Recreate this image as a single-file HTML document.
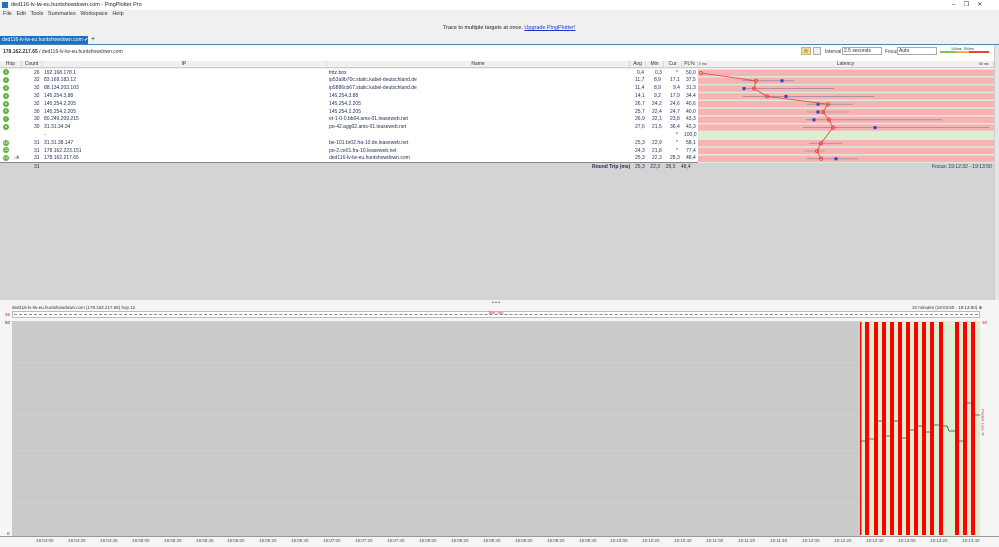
<!DOCTYPE html>
<html><head><meta charset="utf-8"><style>
*{margin:0;padding:0;box-sizing:border-box}
body{width:999px;height:547px;overflow:hidden;background:#f0f0f0;font-family:"Liberation Sans",sans-serif;font-size:5px;color:#333;position:relative}
.a{position:absolute;white-space:nowrap}
.r{position:absolute;left:0;width:994px;height:8px;background:#fff}
.r span{position:absolute;top:1px;font-size:5px;color:#1c2a55}
.hop{position:absolute;left:3px;width:6px;height:6px;border-radius:50%;background:#5cb33a;color:#fff;font-size:4px;font-style:normal;text-align:center;line-height:6px;top:.9px}
.hd{position:absolute;top:61px;height:7px;background:#f0f0f0;border-right:1px solid #d8d8d8;border-bottom:1px solid #ccc;text-align:center;font-size:5px;line-height:7px;color:#333}
.t{position:absolute;top:538px;font-size:4.5px;color:#3a5a3a}
</style></head><body>
<div class="a" style="left:0;top:0;width:999px;height:10px;background:#fff"></div>
<div class="a" style="left:2px;top:2px;width:6px;height:6px;background:#1a73c7"></div>
<div class="a" style="left:11px;top:2px;font-size:5.5px;color:#222">ded116-lv-lw-eu.huntshowdown.com - PingPlotter Pro</div>
<div class="a" style="left:952px;top:1px;font-size:6px;color:#333">&#8211;&nbsp;&nbsp;&nbsp;&nbsp;&nbsp;&#10064;&nbsp;&nbsp;&nbsp;&nbsp;&nbsp;&#10005;</div>
<div class="a" style="left:3px;top:11px;font-size:5.5px;color:#333">File&nbsp;&nbsp;&nbsp;Edit&nbsp;&nbsp;&nbsp;Tools&nbsp;&nbsp;&nbsp;Summaries&nbsp;&nbsp;&nbsp;Workspace&nbsp;&nbsp;&nbsp;Help</div>
<div class="a" style="left:443px;top:25px;font-size:5.5px;color:#222">Trace to multiple targets at once. <span style="color:#2233cc;text-decoration:underline">Upgrade PingPlotter!</span></div>
<div class="a" style="left:0;top:36px;width:88px;height:8px;background:#1a73c7;color:#fff;font-size:5px;line-height:8px;padding-left:2px">ded116-lv-lw-eu.huntshowdown.com ✔</div>
<div class="a" style="left:91px;top:36px;font-size:7px;color:#333">+</div>
<div class="a" style="left:0;top:44px;width:999px;height:1px;background:#4a86b5"></div>
<div class="a" style="left:0;top:45px;width:994px;height:16px;background:#fff"></div>
<div class="a" style="left:3px;top:49px;font-size:5px;color:#333"><b>178.162.217.65</b> / ded116-lv-lw-eu.huntshowdown.com</div>
<div class="a" style="left:801px;top:47px;width:10px;height:8px;background:#e8d9b0;border:1px solid #c9b47a"></div>
<div class="a" style="left:804px;top:49px;width:4px;height:4px;border-radius:50%;background:#f5a623"></div>
<div class="a" style="left:813px;top:47px;width:8px;height:8px;border:1px solid #aaa;background:#eee"></div>
<div class="a" style="left:825px;top:49px;font-size:5px">Interval</div>
<div class="a" style="left:842px;top:47px;width:40px;height:8px;border:1px solid #aaa;background:#fff;font-size:5px;padding-left:1px;line-height:6px">2.5 seconds</div>
<div class="a" style="left:885px;top:49px;font-size:5px">Focus</div>
<div class="a" style="left:897px;top:47px;width:40px;height:8px;border:1px solid #aaa;background:#fff;font-size:5px;padding-left:1px;line-height:6px">Auto</div>
<div class="a" style="left:940px;top:51px;width:16px;height:2px;background:#7cc35a"></div>
<div class="a" style="left:956px;top:51px;width:13px;height:2px;background:#f0b34a"></div>
<div class="a" style="left:969px;top:51px;width:20px;height:2px;background:#e8443a"></div>
<div class="a" style="left:951px;top:47px;font-size:3.5px">100ms&nbsp;&nbsp;200ms</div>
<div class="a" style="left:994px;top:45px;width:5px;height:255px;background:#e6e6e6;border-left:1px solid #ccc"></div>
<div class="hd" style="left:0;width:22px">Hop</div>
<div class="hd" style="left:22px;width:20px">Count</div>
<div class="hd" style="left:42px;width:285px">IP</div>
<div class="hd" style="left:327px;width:303px">Name</div>
<div class="hd" style="left:630px;width:16px">Avg</div>
<div class="hd" style="left:646px;width:18px">Min</div>
<div class="hd" style="left:664px;width:18px">Cur</div>
<div class="hd" style="left:682px;width:16px">PL%</div>
<div class="hd" style="left:698px;width:296px">Latency</div>
<div class="a" style="left:699px;top:62px;font-size:3.5px">0 ms</div>
<div class="a" style="left:979px;top:62px;font-size:3.5px">80 ms</div>

<div class="r" style="top:68.5px"><i class="hop">1</i><span style="left:34px">26</span><span style="left:44px">192.168.178.1</span><span style="left:329px">fritz.box</span><span style="left:637px">0,4</span><span style="left:655px">0,3</span><span style="left:676px">*</span><span style="left:686px">50,0</span></div>
<div class="r" style="top:76.3px"><i class="hop">2</i><span style="left:34px">32</span><span style="left:44px">83.169.183.12</span><span style="left:329px">ip53a9b70c.static.kabel-deutschland.de</span><span style="left:635px">11,7</span><span style="left:654px">8,9</span><span style="left:670px">17,1</span><span style="left:686px">37,5</span></div>
<div class="r" style="top:84.1px"><i class="hop">3</i><span style="left:34px">32</span><span style="left:44px">88.134.203.103</span><span style="left:329px">ip5886cb67.static.kabel-deutschland.de</span><span style="left:635px">11,4</span><span style="left:654px">8,9</span><span style="left:673px">9,4</span><span style="left:686px">31,3</span></div>
<div class="r" style="top:91.9px"><i class="hop">4</i><span style="left:34px">32</span><span style="left:44px">145.254.3.88</span><span style="left:329px">145.254.3.88</span><span style="left:635px">14,1</span><span style="left:654px">9,2</span><span style="left:670px">17,9</span><span style="left:686px">34,4</span></div>
<div class="r" style="top:99.7px"><i class="hop">5</i><span style="left:34px">32</span><span style="left:44px">145.254.2.205</span><span style="left:329px">145.254.2.205</span><span style="left:635px">26,7</span><span style="left:652px">24,2</span><span style="left:670px">24,6</span><span style="left:686px">40,6</span></div>
<div class="r" style="top:107.5px"><i class="hop">6</i><span style="left:34px">30</span><span style="left:44px">145.254.2.205</span><span style="left:329px">145.254.2.205</span><span style="left:635px">25,7</span><span style="left:652px">22,4</span><span style="left:670px">24,7</span><span style="left:686px">40,0</span></div>
<div class="r" style="top:115.3px"><i class="hop">7</i><span style="left:34px">30</span><span style="left:44px">80.249.209.215</span><span style="left:329px">et-1-0-0.bb04.ams-01.leaseweb.net</span><span style="left:635px">26,9</span><span style="left:652px">22,1</span><span style="left:670px">23,8</span><span style="left:686px">43,3</span></div>
<div class="r" style="top:123.1px"><i class="hop">8</i><span style="left:34px">30</span><span style="left:44px">31.31.34.34</span><span style="left:329px">po-42.agg02.ams-01.leaseweb.net</span><span style="left:635px">27,6</span><span style="left:652px">21,5</span><span style="left:670px">36,4</span><span style="left:686px">43,3</span></div>
<div class="r" style="top:130.9px"><span style="left:44px">-</span><span style="left:676px">*</span><span style="left:684px">100,0</span></div>
<div class="r" style="top:138.7px"><i class="hop">10</i><span style="left:34px">31</span><span style="left:44px">31.31.38.147</span><span style="left:329px">be-101.br02.fra-10.de.leaseweb.net</span><span style="left:635px">25,3</span><span style="left:652px">22,9</span><span style="left:676px">*</span><span style="left:686px">58,1</span></div>
<div class="r" style="top:146.5px"><i class="hop">11</i><span style="left:34px">31</span><span style="left:44px">178.162.223.151</span><span style="left:329px">po-2.ce01.fra-10.leaseweb.net</span><span style="left:635px">24,3</span><span style="left:652px">21,8</span><span style="left:676px">*</span><span style="left:686px">77,4</span></div>
<div class="r" style="top:154.3px;height:7.8px"><i class="hop">12</i><span style="left:14px">.ılı</span><span style="left:34px">31</span><span style="left:44px">178.162.217.65</span><span style="left:329px">ded116-lv-lw-eu.huntshowdown.com</span><span style="left:635px">25,3</span><span style="left:652px">22,3</span><span style="left:670px">28,3</span><span style="left:686px">48,4</span></div>
<div class="a" style="left:0;top:162px;width:994px;height:1px;background:#888"></div>
<div class="a" style="left:0;top:163px;width:994px;height:137px;background:#d4d4d4"></div>
<div class="a" style="left:34px;top:164px;font-size:5px;color:#1c2a55">31</div>
<div class="a" style="left:592px;top:164px;font-size:5px;color:#1c2a55"><b>Round Trip (ms)</b></div>
<div class="a" style="left:635px;top:164px;font-size:5px;color:#1c2a55">25,3&nbsp;&nbsp;&nbsp;&nbsp;22,3&nbsp;&nbsp;&nbsp;&nbsp;28,3&nbsp;&nbsp;&nbsp;&nbsp;48,4</div>
<div class="a" style="left:932px;top:164px;font-size:5px;color:#1c2a55">Focus: 19:12:32 - 19:13:50</div>

<svg class="a" style="left:698px;top:68.5px" width="296" height="94">
<rect width="296" height="94" fill="#dbeed0"/>
<g fill="#f7b2b6">
<rect y="0.8" width="296" height="6.3"/><rect y="8.6" width="296" height="6.3"/><rect y="16.4" width="296" height="6.3"/><rect y="24.2" width="296" height="6.3"/><rect y="32" width="296" height="6.3"/><rect y="39.8" width="296" height="6.3"/><rect y="47.6" width="296" height="6.3"/><rect y="55.4" width="296" height="6.3"/><rect y="71" width="296" height="6.3"/><rect y="78.8" width="296" height="6.3"/><rect y="86.6" width="296" height="6.3"/>
</g>
<g stroke="#8a7a9a" stroke-width="0.6">
<line x1="44" y1="11.8" x2="96" y2="11.8"/><line x1="46" y1="19.6" x2="136" y2="19.6"/><line x1="45" y1="27.4" x2="176" y2="27.4"/><line x1="109" y1="35.2" x2="155" y2="35.2"/><line x1="109" y1="43" x2="151" y2="43"/><line x1="108" y1="50.8" x2="244" y2="50.8"/><line x1="105" y1="58.6" x2="291" y2="58.6"/><line x1="111" y1="74.2" x2="144" y2="74.2"/><line x1="106" y1="82" x2="127" y2="82"/><line x1="109" y1="89.8" x2="160" y2="89.8"/>
</g>
<g fill="#3a3adc"><rect x="82.5" y="10.3" width="3" height="3"/><rect x="44.5" y="18.1" width="3" height="3"/><rect x="86.5" y="25.9" width="3" height="3"/><rect x="118.5" y="33.7" width="3" height="3"/><rect x="118.5" y="41.5" width="3" height="3"/><rect x="114.5" y="49.3" width="3" height="3"/><rect x="175.5" y="57.1" width="3" height="3"/><rect x="136.5" y="88.3" width="3" height="3"/></g>
<polyline fill="none" stroke="#e8443a" stroke-width="0.8" points="3,4 58,11.8 56,19.6 69,27.4 130,35.2 125,43 131,50.8 135,58.6 123,74.2 119,82 123,89.8"/>
<g fill="none" stroke="#e8443a" stroke-width="0.8"><circle cx="3" cy="4" r="1.6"/><circle cx="58" cy="11.8" r="1.6"/><circle cx="56" cy="19.6" r="1.6"/><circle cx="69" cy="27.4" r="1.6"/><circle cx="130" cy="35.2" r="1.6"/><circle cx="125" cy="43" r="1.6"/><circle cx="131" cy="50.8" r="1.6"/><circle cx="135" cy="58.6" r="1.6"/><circle cx="123" cy="74.2" r="1.6"/><circle cx="119" cy="82" r="1.6"/><circle cx="123" cy="89.8" r="1.6"/></g>
</svg>

<div class="a" style="left:0;top:300px;width:999px;height:247px;background:#f5f5f5"></div>
<div class="a" style="left:492px;top:300px;font-size:5px;color:#333">• • •</div>
<div class="a" style="left:12px;top:305px;font-size:4.5px;color:#333">ded116-lv-lw-eu.huntshowdown.com (178.162.217.65) hop 12</div>
<div class="a" style="left:912px;top:305px;font-size:4.5px;color:#333">10 minutes (19:03:50 - 19:13:50) ⊕</div>
<div class="a" style="left:12px;top:311px;width:968px;height:7px;background:#fff;border:1px solid #bbb"></div>
<div class="a" style="left:14px;top:314px;width:964px;border-top:1px dashed #888"></div>
<div class="a" style="left:488px;top:311px;font-size:3.5px;color:#c33">Jitter (ms)</div>
<div class="a" style="left:5px;top:312px;font-size:4.5px;color:#c33">35</div>
<div class="a" style="left:5px;top:320px;font-size:4.5px;color:#333">50</div>
<div class="a" style="left:7px;top:531px;font-size:4.5px;color:#333">0</div>
<div class="a" style="left:982px;top:320px;font-size:4.5px;color:#c33">30</div>
<div class="a" style="left:5px;top:420px;font-size:4px;color:#333;transform:rotate(-90deg)">Latency (ms)</div>
<div class="a" style="left:970px;top:420px;font-size:4px;color:#c33;transform:rotate(90deg)">Packet Loss %</div>
<svg class="a" style="left:12px;top:321px" width="968" height="215">
<rect width="968" height="215" fill="#cbcbcb"/>
<g stroke="#bdbdbd" stroke-width="0.5"><line x1="0" y1="44" x2="848" y2="44"/><line x1="0" y1="88" x2="848" y2="88"/><line x1="0" y1="132" x2="848" y2="132"/><line x1="0" y1="176" x2="848" y2="176"/></g>
<rect x="848" width="120" height="215" fill="#dcefd2"/>
<g fill="#ff0000">
<rect x="848" y="1" width="1.5" height="213"/><rect x="853" y="1" width="4" height="213"/><rect x="862" y="1" width="4" height="213"/><rect x="870" y="1" width="4" height="213"/><rect x="878" y="1" width="4" height="213"/><rect x="886" y="1" width="4" height="213"/><rect x="894" y="1" width="4" height="213"/><rect x="902" y="1" width="4" height="213"/><rect x="910" y="1" width="4" height="213"/><rect x="918" y="1" width="4" height="213"/><rect x="927" y="1" width="4" height="213"/><rect x="943" y="1" width="4" height="213"/><rect x="951" y="1" width="4" height="213"/><rect x="959" y="1" width="4" height="213"/>
</g>
<g stroke="#333" stroke-width="0.7">
<line x1="849" y1="120" x2="853" y2="120"/><line x1="857" y1="118" x2="862" y2="118"/><line x1="866" y1="100" x2="870" y2="100"/><line x1="874" y1="115" x2="878" y2="115"/><line x1="882" y1="100" x2="886" y2="100"/><line x1="890" y1="117" x2="894" y2="117"/><line x1="898" y1="109" x2="902" y2="109"/><line x1="906" y1="105" x2="910" y2="105"/><line x1="914" y1="111" x2="918" y2="111"/><line x1="922" y1="104" x2="927" y2="104"/><line x1="931" y1="105" x2="935" y2="105"/><line x1="935" y1="105" x2="937" y2="110"/><line x1="937" y1="110" x2="943" y2="110"/><line x1="947" y1="120" x2="951" y2="120"/><line x1="955" y1="82" x2="959" y2="82"/><line x1="963" y1="94" x2="968" y2="94"/>
</g>
</svg>
<div class="a" style="left:0;top:536px;width:999px;height:1px;background:#999"></div>
<div class="t" style="left:36px">19:04:00</div><div class="t" style="left:68px">19:04:20</div><div class="t" style="left:100px">19:04:40</div><div class="t" style="left:132px">19:05:00</div><div class="t" style="left:164px">19:05:20</div><div class="t" style="left:196px">19:05:40</div><div class="t" style="left:227px">19:06:00</div><div class="t" style="left:259px">19:06:20</div><div class="t" style="left:291px">19:06:40</div><div class="t" style="left:323px">19:07:00</div><div class="t" style="left:355px">19:07:20</div><div class="t" style="left:387px">19:07:40</div><div class="t" style="left:419px">19:08:00</div><div class="t" style="left:451px">19:08:20</div><div class="t" style="left:483px">19:08:40</div><div class="t" style="left:515px">19:09:00</div><div class="t" style="left:547px">19:09:20</div><div class="t" style="left:579px">19:09:40</div><div class="t" style="left:610px">19:10:00</div><div class="t" style="left:642px">19:10:20</div><div class="t" style="left:674px">19:10:40</div><div class="t" style="left:706px">19:11:00</div><div class="t" style="left:738px">19:11:20</div><div class="t" style="left:770px">19:11:40</div><div class="t" style="left:802px">19:12:00</div><div class="t" style="left:834px">19:12:20</div><div class="t" style="left:866px">19:12:40</div><div class="t" style="left:898px">19:13:00</div><div class="t" style="left:930px">19:13:20</div><div class="t" style="left:962px">19:13:40</div>
</body></html>
